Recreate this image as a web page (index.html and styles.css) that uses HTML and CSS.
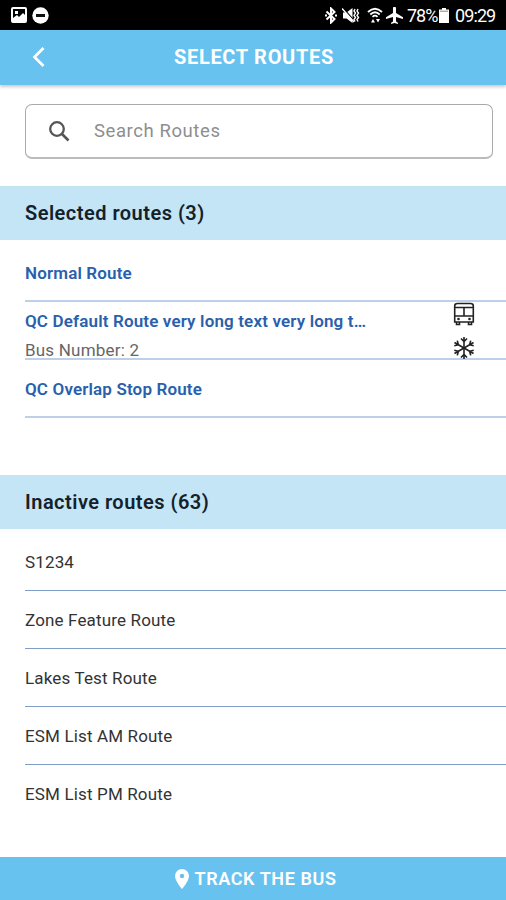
FILE: index.html
```html
<!DOCTYPE html>
<html lang="en">
<head>
<meta charset="utf-8">
<title>Select Routes</title>
<link rel="stylesheet" href="styles.css">
</head>
<body>
<div class="app">
  <div class="status">
    <svg class="s-img" width="16" height="16" viewBox="0 0 16 16"><rect x="1" y="1" width="14" height="14" rx="1" fill="none" stroke="#fff" stroke-width="2"/><path d="M2 14V11L6 8L8 10L12 6L14 8V14Z" fill="#fff"/><rect x="4" y="4" width="3" height="3" fill="#fff"/></svg>
    <svg class="s-dnd" width="17" height="17" viewBox="0 0 17 17"><circle cx="8.5" cy="8.5" r="8.2" fill="#fff"/><rect x="4" y="7" width="9" height="3" fill="#111"/></svg>
    <div class="status-right">
      <svg class="s-bt" width="12" height="17" viewBox="0 0 12 17"><path d="M1.5 4.5L9.5 12L6 15.5V1.5L9.5 5L1.5 12.5" fill="none" stroke="#fff" stroke-width="2"/><path d="M0 7.5h2v2H0zM10 7.5h2v2h-2z" fill="#fff"/></svg>
      <svg class="s-mute" width="18" height="17" viewBox="0 0 18 17"><path d="M1 5.5H4.5L10.5 1V16L4.5 11.5H1Z" fill="#fff"/><path d="M1.500 1.500L12 13.500" stroke="#000" stroke-width="1.2"/><path d="M0 1.5L12 15" stroke="#fff" stroke-width="1.4"/><path d="M13 2l-1 2 1.500 2-1.500 2.500 1.500 2-1.500 2 1 2M16 2l-1 2 1.500 2-1.500 2.500 1.500 2-1.500 2 1 2" fill="none" stroke="#fff" stroke-width="1.400"/></svg>
      <svg class="s-wifi" width="16" height="17" viewBox="0 0 16 17"><path d="M1 5Q8-1.500 15 5M3.300 7.500Q8 3 12.700 7.500M5.500 9.800Q8 7.500 10.500 9.800" fill="none" stroke="#fff" stroke-width="1.800"/><path d="M4 15.500L6 12L8 15.500ZM9 12H13L11 15.500Z" fill="#fff"/></svg>
      <svg class="s-plane" width="17" height="17" viewBox="2 2 20 20"><path d="M10.200 9V3.500a1.800 1.800 0 0 1 3.600 0V9L22 14v2.200l-8.200-2.500V19l2.200 1.600V22l-4-1.100L8 22v-1.400l2.200-1.600v-5.300L2 16.200V14Z" fill="#fff"/></svg>
      <span class="pct">78%</span>
      <svg class="s-bat" width="10" height="15" viewBox="0 0 10 15"><path d="M3 0h4v1.500h3V15H0V1.500h3z" fill="#fff"/><path d="M1 3.200h8" stroke="#888"/></svg>
      <span class="clock">09:29</span>
    </div>
  </div>
  <header class="bar">
    <svg class="back" width="14" height="22" viewBox="0 0 14 22"><path d="M11.500 2L2.500 11L11.500 20" fill="none" stroke="#fff" stroke-width="2.700"/></svg>
    <h1>SELECT ROUTES</h1>
  </header>
  <div class="search">
    <svg width="24" height="24" viewBox="0 0 24 24"><circle cx="9" cy="10" r="6.800" fill="none" stroke="#555" stroke-width="2.300"/><path d="M14 15L20.500 21.500" stroke="#555" stroke-width="2.700"/></svg>
    <span>Search Routes</span>
  </div>
  <h2 class="section">Selected routes (3)</h2>
  <ul class="routes selected">
    <li><span>Normal Route</span></li>
    <li class="detail">
      <div class="copy"><span>QC Default Route very long text very long t…</span><small>Bus Number: 2</small></div>
      <div class="icons">
        <svg width="22" height="24" viewBox="0 0 22 24"><path d="M1.700 20V4Q1.700 1.500 4.500 1.500H17.500Q20.300 1.500 20.300 4V20ZM1.700 5.500H20.300M1.700 14H20.300M11 5.500V14M3.500 20V22.500H6.500V20M15.500 20V22.500H18.500V20" fill="none" stroke="#222" stroke-width="1.600"/><circle cx="5.500" cy="17" r="1.300" fill="#222"/><circle cx="16.500" cy="17" r="1.300" fill="#222"/></svg>
        <svg width="22" height="24" viewBox="-11 -12 22 24"><g fill="none" stroke="#222" stroke-width="1.600"><path id="arm" d="M0 0V-11M-3-9.500L0-6.500L3-9.500"/><use href="#arm" transform="rotate(60)"/><use href="#arm" transform="rotate(120)"/><use href="#arm" transform="rotate(180)"/><use href="#arm" transform="rotate(240)"/><use href="#arm" transform="rotate(300)"/></g></svg>
      </div>
    </li>
    <li><span>QC Overlap Stop Route</span></li>
  </ul>
  <h2 class="section">Inactive routes (63)</h2>
  <ul class="routes inactive">
    <li>S1234</li>
    <li>Zone Feature Route</li>
    <li>Lakes Test Route</li>
    <li>ESM List AM Route</li>
    <li>ESM List PM Route</li>
  </ul>
  <footer class="track">
    <svg width="14" height="20" viewBox="0 0 14 20"><path fill-rule="evenodd" d="M7 0a7 7 0 0 0-7 7c0 5 7 13 7 13s7-8 7-13a7 7 0 0 0-7-7Zm0 4.800a2.200 2.200 0 1 1 0 4.400 2.200 2.200 0 0 1 0-4.400Z" fill="#fff"/></svg>
    <span>TRACK THE BUS</span>
  </footer>
</div>
</body>
</html>
```
FILE: styles.css
```css
* { box-sizing: border-box; }
body { margin: 0; background: #fff; font-family: Roboto, "Liberation Sans", sans-serif; }
h1, h2, ul { margin: 0; padding: 0; }
svg { display: block; flex: none; }
.app { width: 506px; height: 900px; display: flex; flex-direction: column; overflow: hidden; }
.status { flex: none; height: 30px; background: #000; color: #fff; display: flex; align-items: center; padding: 0 11px; }
.s-dnd { margin-left: 5px; }
.status-right { margin-left: auto; display: flex; align-items: center; white-space: nowrap; font-size: 18px; line-height: 30px; }
.s-mute { margin-left: 5px; }
.s-wifi { margin-left: 7px; }
.s-plane { margin-left: 3px; }
.pct { width: 30px; margin: 2px 0 0 4px; letter-spacing: -1px; }
.s-bat { margin-left: 2px; }
.clock { width: 40px; margin: 2px 0 0 6px; letter-spacing: -.9px; }
.bar { flex: none; height: 55px; background: #68c2f0; box-shadow: 0 2px 3px rgba(60, 40, 60, .25); display: flex; align-items: center; padding: 0 0 2px 32px; }
.bar h1 { flex: 1; margin: 0 44px 0 0; text-align: center; color: #fff; font-size: 20px; line-height: 24px; font-weight: 700; letter-spacing: .7px; }
.search { flex: none; height: 55px; margin: 19px 13px 27px 25px; border: 1px solid #aaa; border-bottom: 2px solid #bbb; border-radius: 7px; display: flex; align-items: center; gap: 22px; padding-left: 22px; color: #8e8e8e; font-size: 18.5px; letter-spacing: .58px; }
.search span { margin-top: -1px; }
.section { flex: none; height: 54px; padding-left: 25px; background: #c4e5f5; color: #14212b; font-size: 20px; line-height: 54px; font-weight: 600; letter-spacing: .48px; }
.routes { flex: none; list-style: none; margin-left: 25px; padding-top: 4px; letter-spacing: .15px; }
.routes li { height: 58px; display: flex; align-items: center; border-bottom: 2px solid #bdd0e7; white-space: nowrap; font-size: 17px; padding-top: 2px; }
.selected { height: 235px; color: #2960ad; font-weight: 600; }
.routes .detail { align-items: flex-start; justify-content: space-between; padding: 0 31px 0 0; }
.copy { display: flex; flex-direction: column; line-height: 20px; padding-top: 9px; }
.copy small { font-size: 17px; line-height: 20px; margin-top: 9px; color: #666; font-weight: 400; letter-spacing: .2px; }
.icons { display: flex; flex-direction: column; gap: 10px; }
.inactive { color: #333; }
.inactive li { border-bottom: 1px solid #7f9fc9; padding-top: 0; }
.inactive li:last-child { border: 0; }
.track { flex: none; height: 43px; margin-top: auto; padding-left: 6px; background: #68c2f0; color: #fff; display: flex; align-items: center; justify-content: center; gap: 5px; font-size: 18px; font-weight: 600; letter-spacing: .6px; }
```
